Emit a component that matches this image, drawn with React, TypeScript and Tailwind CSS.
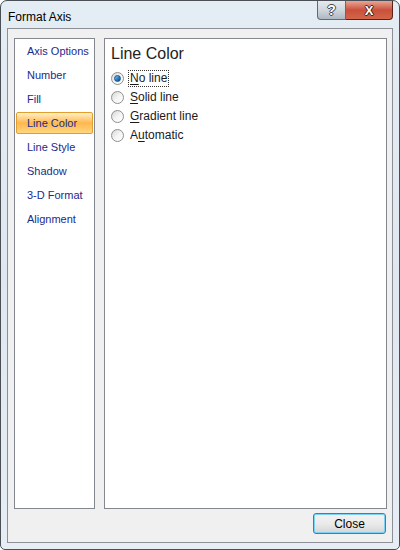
const font = { fontFamily: '"Liberation Sans", Arial, sans-serif' };

const items = [
  "Axis Options",
  "Number",
  "Fill",
  "Line Color",
  "Line Style",
  "Shadow",
  "3-D Format",
  "Alignment",
];

function Radio({ checked }: { checked?: boolean }) {
  return (
    <span className="relative flex h-[13px] w-[13px] shrink-0 items-center justify-center rounded-full border border-[#8e8f8f] bg-gradient-to-br from-[#d6d6d6] via-[#f4f4f4] to-[#ffffff]">
      {checked && (
        <span className="h-[7px] w-[7px] rounded-full border border-[#1a4f85] bg-gradient-to-br from-[#8fd0f5] via-[#2a84c8] to-[#0d4c8a]" />
      )}
    </span>
  );
}

function Option({
  pre,
  u,
  post,
  checked,
}: {
  pre?: string;
  u: string;
  post: string;
  checked?: boolean;
}) {
  return (
    <div className="flex h-[19px] items-center">
      <Radio checked={checked} />
      <span
        className={
          "ml-[5px] px-[1px] leading-[15px] text-[12px] text-[#1a1a1a] " +
          (checked ? "outline outline-1 outline-dotted outline-[#333]" : "")
        }
      >
        {pre}
        <span className="underline underline-offset-2">{u}</span>
        {post}
      </span>
    </div>
  );
}

export default function App() {
  return (
    <div
      style={font}
      className="flex h-[550px] w-[400px] flex-col overflow-hidden rounded-t-[7px] rounded-b-[5px] border border-[#4a4f55] bg-gradient-to-b from-[#e4ecf4] via-[#dfe7f0] to-[#e6edf4]"
    >
      <div className="flex h-[27px] items-start">
        <span className="ml-[7px] mt-[7px] text-[12px] text-black">Format Axis</span>
        <div className="ml-auto mr-[6px] flex">
          <div className="flex h-[19px] w-[29px] items-center justify-center rounded-bl-[4px] border border-t-0 border-[#5f6a76] bg-gradient-to-b from-[#e6eaee] via-[#cfd6dd] to-[#aeb8c2]">
            <span className="text-[14px] font-bold leading-none text-white [text-shadow:1px_0_0_#444,-1px_0_0_#444,0_1px_0_#444,0_-1px_0_#444]">?</span>
          </div>
          <div className="flex h-[19px] w-[47px] items-center justify-center rounded-br-[4px] border border-l-0 border-t-0 border-[#5c2118] bg-gradient-to-b from-[#e8a595] via-[#c9503a] to-[#d4654a]">
            <span className="text-[13px] font-bold leading-none text-white [text-shadow:1px_0_0_#4a1a10,-1px_0_0_#4a1a10,0_1px_0_#4a1a10,0_-1px_0_#4a1a10]">X</span>
          </div>
        </div>
      </div>

      <div className="mx-[6px] mb-[6px] flex flex-1 flex-col border border-[#8c9096] bg-[#f0f0f0] pl-[6px] pr-[5px] pt-[9px] pb-[8px]">
        <div className="flex h-[471px] gap-[9px]">
          <div className="flex w-[81px] flex-col border border-[#828790] bg-white">
            {items.map((it) => (
              <div
                key={it}
                className={
                  "mx-[1px] my-[1px] flex h-[22px] items-center whitespace-nowrap rounded-[2px] pl-[10px] text-[11px] text-[#1b2a8e] " +
                  (it === "Line Color"
                    ? "border border-[#e0a030] bg-gradient-to-b from-[#fff0c4] via-[#ffb74a] to-[#ffd680]"
                    : "border border-transparent")
                }
              >
                {it}
              </div>
            ))}
          </div>
          <div className="flex flex-1 flex-col border border-[#828790] bg-white pl-[6px] pt-[5px]">
            <div className="mb-[5px] h-[20px] text-[16px] leading-[20px] text-[#222]">Line Color</div>
            <Option u="N" post="o line" checked />
            <Option u="S" post="olid line" />
            <Option u="G" post="radient line" />
            <Option pre="A" u="u" post="tomatic" />
          </div>
        </div>
        <div className="mt-[4px] flex justify-end pr-[1px]">
          <button className="h-[21px] w-[73px] rounded-[3px] border border-[#3c7fb1] bg-gradient-to-b from-[#f2f2f2] via-[#ebebeb] to-[#d5d5d5] text-[12px] text-black shadow-[inset_0_0_0_1px_#7fd0f5]">
            Close
          </button>
        </div>
      </div>
    </div>
  );
}
